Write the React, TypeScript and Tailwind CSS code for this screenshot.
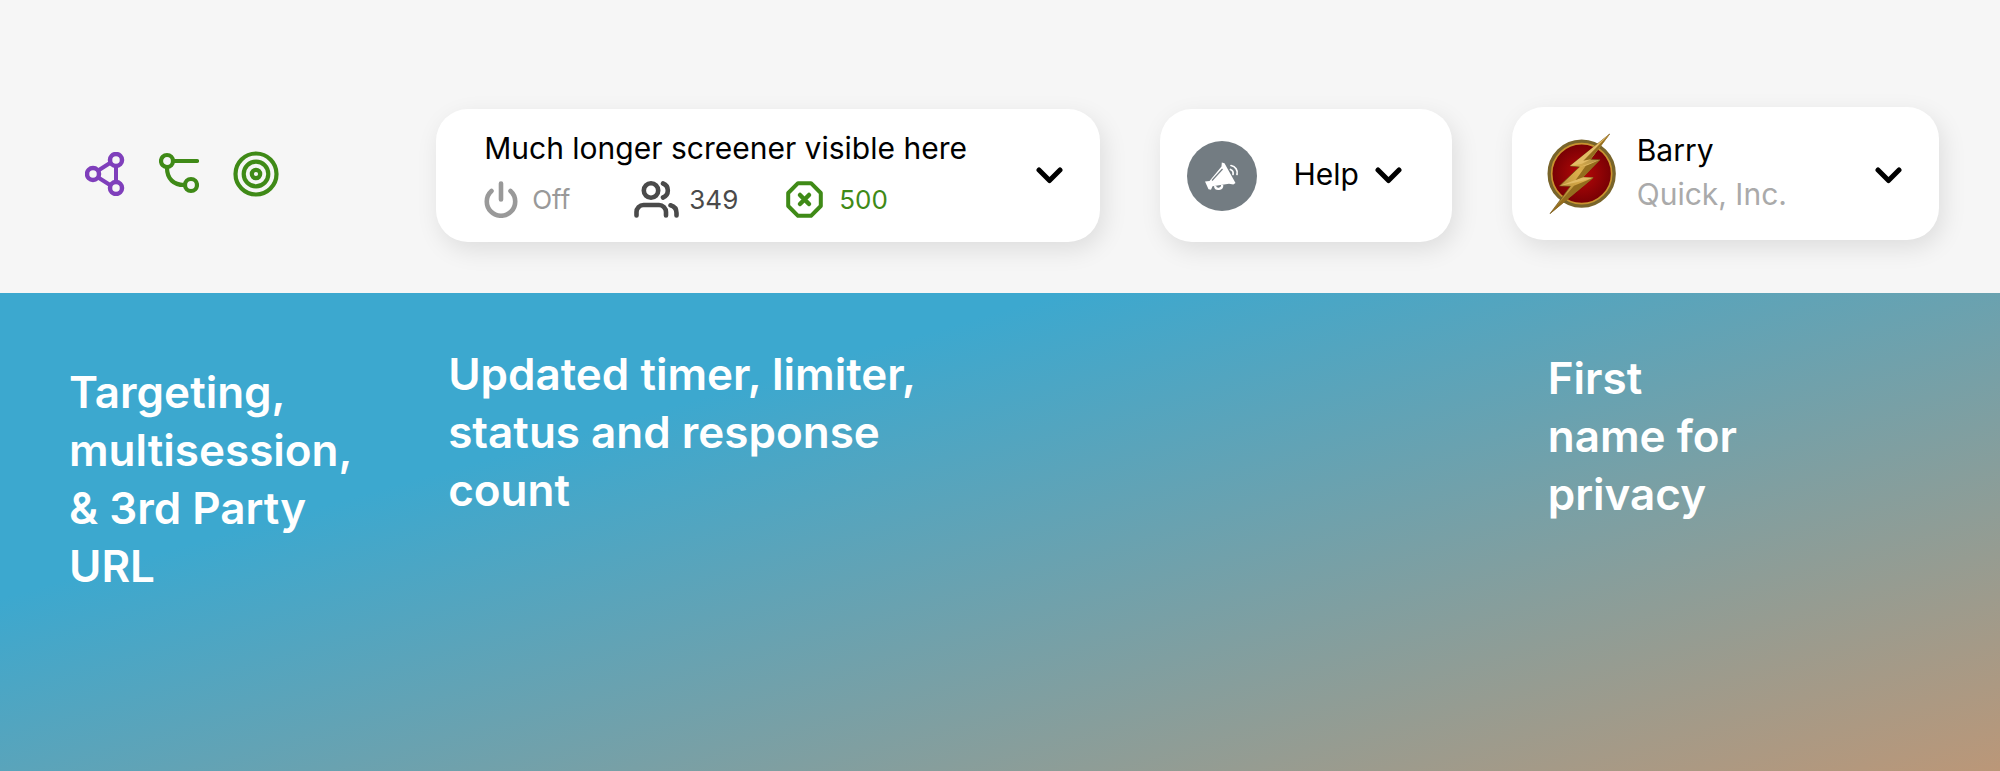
import clsx from "clsx";
import type { ReactNode } from "react";

const columns = "grid grid-cols-[291fr_663fr_292fr_427fr] gap-x-[60px] pr-[61px] pl-[85px]";

const NetworkIcon = () => (
  <svg viewBox="0 0 40 44" className="h-11 w-10" fill="none" stroke="#7f3fbb" strokeWidth="4.5">
    <path d="M14 18 25 11M14 26 25 33M31 15v14" strokeWidth="4" />
    <circle cx="8" cy="22" r="6" />
    <circle cx="31" cy="8" r="6" />
    <circle cx="31" cy="36" r="6" />
  </svg>
);

const BranchIcon = () => (
  <svg viewBox="0 0 40 44" className="h-11 w-10" fill="none" stroke="#3f8a17" strokeWidth="4.2" strokeLinecap="round">
    <circle cx="8" cy="9" r="6" />
    <circle cx="32" cy="33" r="6" />
    <path d="M15 9h23M8 16c0 11 7 17 17 17" />
  </svg>
);

const TargetIcon = () => (
  <svg viewBox="0 0 46 46" className="size-[46px]" fill="none" stroke="#3f8a17" strokeWidth="4.2">
    <circle cx="23" cy="23" r="20.5" />
    <circle cx="23" cy="23" r="12.3" />
    <circle cx="23" cy="23" r="4.2" />
  </svg>
);

const PowerIcon = () => (
  <svg viewBox="0 0 34 37" className="h-[37px] w-[34px]" fill="none" stroke="#999" strokeWidth="4.6" strokeLinecap="round">
    <path d="M17 2.500v16M7.500 10a14.200 14.200 0 1 0 19 0" />
  </svg>
);

const UsersIcon = () => (
  <svg viewBox="0 0 45 37" className="h-[37px] w-[45px]" fill="none" stroke="#4a4a4a" strokeWidth="4.6" strokeLinecap="round">
    <circle cx="17" cy="9.500" r="7.200" />
    <path d="M2.500 34.500V31a7 7 0 0 1 7-7h15.500a7 7 0 0 1 7 7v3.500M29 2.500a7.500 7.500 0 0 1 0 14M36.500 24.300c3.700 1 6 4 6 7.700v2.500" />
  </svg>
);

const LimitIcon = () => (
  <svg viewBox="0 0 37 37" className="size-[37px]" fill="none" stroke="#3f8a17" strokeWidth="4" strokeLinecap="round">
    <path d="M12 2.200h13l9.800 9.800v13L25 34.800H12L2.200 25V12Z" strokeLinejoin="round" />
    <path d="m14 14 9 9m0-9-9 9" strokeWidth="4.500" />
  </svg>
);

const Chevron = ({ className }: { className?: string }) => (
  <svg viewBox="0 0 27 17" className={clsx("h-[17px] w-[27px] shrink-0", className)} fill="none" stroke="#000" strokeWidth="5" strokeLinecap="round" strokeLinejoin="round">
    <path d="m3 3 10.500 10.500L24 3" />
  </svg>
);

const MegaphoneIcon = () => (
  <svg viewBox="0 0 70 70" className="size-[70px] shrink-0">
    <circle cx="35" cy="35" r="35" fill="#737c82" />
    <path d="M18 40.500 22.500 40 34.500 25.500l.3-4 2.700.8L48.500 42l-2.200 1.500-4.300-.8-16.500 2.500-1.500 3.500-2.500-.5Z" fill="#fff" />
    <path d="M25 39.500 35.500 28" stroke="#737c82" strokeWidth="1.200" />
    <path d="M28 45c.8 4.500 7.500 3.500 7.200-1" fill="none" stroke="#fff" strokeWidth="2.200" />
    <path d="M43.500 28.500c2 .8 3 2.700 2.500 5M44 24.500c4.500 1 7 4.500 6 9" fill="none" stroke="#fff" strokeWidth="1.700" strokeLinecap="round" />
  </svg>
);

const BoltLogo = () => (
  <svg viewBox="36 22 210 246" className="h-[82px] w-[70px] shrink-0">
    <defs>
      <radialGradient id="disc">
        <stop offset="0" stopColor="#b80808" />
        <stop offset="1" stopColor="#760004" />
      </radialGradient>
      <linearGradient id="bolt" x1="0" y1="1" x2="1" y2="0">
        <stop offset="0" stopColor="#94752a" />
        <stop offset=".5" stopColor="#dcae4c" />
        <stop offset="1" stopColor="#80703f" />
      </linearGradient>
    </defs>
    <circle cx="140" cy="144" r="92" fill="url(#disc)" />
    <circle cx="140" cy="144" r="96" fill="none" stroke="#78642a" strokeWidth="13" />
    <circle cx="140" cy="144" r="90" fill="none" stroke="#c8922f" strokeWidth="5" />
    <path d="M224 25 105 121l28 3-60 57 33 1L45 264l130-108-31-1 51-53-28-1Z" fill="url(#bolt)" stroke="#6b4d12" strokeWidth="2" />
    <path d="m224 25-119 96 36-7 26-13ZM195 102l-62 22 38-8ZM73 181l71-26 31 1-50 14Z" fill="#e2bb66" />
    <path d="m224 25-57 76-22 4ZM195 102l-51 53-22 8 30-42ZM175 156 45 264l72-84Z" fill="#946d1e" />
  </svg>
);

const Card = ({ className, children }: { className?: string; children: ReactNode }) => (
  <button
    type="button"
    className={clsx("flex h-[133px] items-center rounded-[32px] bg-white text-left shadow-[4px_8px_24px_rgba(0,0,0,0.1)]", className)}
  >
    {children}
  </button>
);

const Note = ({ className, children }: { className?: string; children: ReactNode }) => (
  <p className={clsx("text-[44px]/[58px] font-semibold text-white", className)}>{children}</p>
);

const App = () => {
  return (
    <div className="flex min-h-screen flex-col bg-[#f6f6f6] font-['Inter',sans-serif]">
      <header className={clsx(columns, "items-start pt-[107px] pb-[51px]")}>
        <div className="flex items-center gap-[34px] self-center pb-0.5">
          <NetworkIcon />
          <BranchIcon />
          <TargetIcon />
        </div>
        <Card className="mt-0.5 pr-[37px] pl-12">
          <span className="min-w-0 flex-1">
            <span className="block h-8 text-[30px]/[30px] whitespace-nowrap text-black">
              Much longer screener visible here
            </span>
            <span className="mt-4 flex items-center text-[26px]/9">
              <PowerIcon />
              <span className="ml-3.5 text-[#999]">Off</span>
              <span className="ml-16">
                <UsersIcon />
              </span>
              <span className="ml-2.5 text-[#4a4a4a]">349</span>
              <span className="ml-12">
                <LimitIcon />
              </span>
              <span className="ml-4 text-[#3f8a17]">500</span>
            </span>
          </span>
          <Chevron />
        </Card>
        <Card className="mt-0.5 pl-[27px]">
          <MegaphoneIcon />
          <span className="ml-[37px] pb-1 text-[30px]/[38px] text-black">Help</span>
          <Chevron className="ml-4" />
        </Card>
        <Card className="pr-[37px] pl-[35px]">
          <BoltLogo />
          <span className="ml-5 flex-1 pb-1 text-[30px]/[44px]">
            <span className="block text-black">Barry</span>
            <span className="block text-[#aaa]">Quick, Inc.</span>
          </span>
          <Chevron className="mt-1" />
        </Card>
      </header>
      <main className={clsx(columns, "flex-1 items-start bg-[linear-gradient(164deg,#3ca8cf_29%,#bb9778_100%)] pt-[52px] pb-24")}>
        <Note className="-ml-4 pt-[18px]">
          Targeting,
          <br />
          multisession,
          <br />
          &amp; 3rd Party
          <br />
          URL
        </Note>
        <Note className="pl-3">
          Updated timer, limiter,
          <br />
          status and response
          <br />
          count
        </Note>
        <Note className="col-start-4 pt-1 pl-9">
          First
          <br />
          name for
          <br />
          privacy
        </Note>
      </main>
    </div>
  );
};

export default App;
